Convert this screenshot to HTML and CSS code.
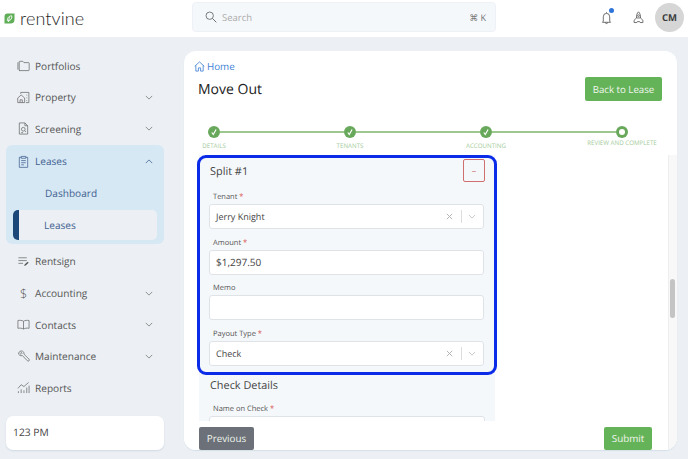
FILE: index.html
```html
<!DOCTYPE html>
<html lang="en">
<head>
<meta charset="utf-8">
<title>Move Out</title>
<link rel="stylesheet" href="styles.css">
</head>
<body>
<header class="topbar">
  <div class="brand">
    <svg class="leaf" viewBox="0 0 11 11" width="11" height="11"><path d="M3.500.5H10.500V6.500A4 4 0 0 1 6.500 10.500H.5V3.500A3 3 0 0 1 3.500.5z" fill="#5fae57"/><path d="M3.500 8.200C2.800 5.500 4.500 3 7.800 2.800 8.200 5.800 6.300 7.800 4.400 7.600M5.400 3.600L4.500 9" fill="none" stroke="#fff" stroke-width=".9"/></svg>
    <span class="wordmark">rentvine</span>
  </div>
  <div class="search">
    <svg class="ico" viewBox="0 0 14 14" width="12" height="12"><circle cx="5.500" cy="5.500" r="4.300" fill="none" stroke="#666" stroke-width="1"/><path d="M8.700 8.700l4.500 4.500" stroke="#666" stroke-width="1.100" fill="none"/></svg>
    <span class="search-text">Search</span>
    <span class="kbd">⌘ K</span>
  </div>
  <div class="top-actions">
    <span class="bell">
      <svg viewBox="0 0 12 15" width="11" height="14"><path d="M6 1.200V2.300M2.500 11V6.300a3.500 3.900 0 0 1 7 0V11l1 1.200h-9zM4.800 12.400a1.200 1.200 0 0 0 2.400 0" fill="none" stroke="#555" stroke-width=".9"/></svg>
      <i class="dot"></i>
    </span>
    <svg class="rocket" viewBox="0 0 12 14" width="11" height="13"><path d="M6 .8C4.300 2.300 3.800 4.500 3.800 7.500h4.400C8.200 4.500 7.700 2.300 6 .8zM3.800 7.500L1.200 10v2.500h3l.5-1h2.600l.5 1h3V10L8.200 7.500" fill="none" stroke="#555" stroke-width=".9"/><circle cx="6" cy="5" r="1" fill="none" stroke="#555" stroke-width=".8"/></svg>
    <span class="avatar">CM</span>
  </div>
</header>

<div class="shell">
  <nav class="sidebar">
    <a class="nav-item">
      <svg class="nav-ico" viewBox="0 0 14 14"><path d="M1 11.500V3.500M2.500 12.500h10a.6.6 0 0 0 .6-.6V4.500a.6.6 0 0 0-.6-.6H7.500L6.300 2.500H3a.6.6 0 0 0-.6.6v8.800a.6.6 0 0 0 .6.6z"/></svg>
      <span class="nav-label">Portfolios</span>
    </a>
    <a class="nav-item">
      <svg class="nav-ico" viewBox="0 0 14 14"><path d="M.8 7.500L4.500 4.300l3.700 3.200v5H.8zM3.300 12.500V9.500h2.400v3M4 3V1.500h8.800v11H9.500M10.500 4v.8M10.500 7v.8M10.500 10v.8"/></svg>
      <span class="nav-label">Property</span>
      <svg class="chev" viewBox="0 0 10 6"><path d="M1 1l4 4 4-4"/></svg>
    </a>
    <a class="nav-item">
      <svg class="nav-ico" viewBox="0 0 14 14"><path d="M2.500 1h6l3 3v9h-9zM8.500 1v3h3"/><circle cx="6.800" cy="7.800" r="2"/><path d="M8.300 9.300l1.500 1.500M4.500 11.500h2"/></svg>
      <span class="nav-label">Screening</span>
      <svg class="chev" viewBox="0 0 10 6"><path d="M1 1l4 4 4-4"/></svg>
    </a>
    <div class="group">
      <a class="nav-item in-group">
        <svg class="nav-ico blue" viewBox="0 0 14 14"><path d="M4.500 2.500H2.500v10.800h9V2.500H9.500M4.500 1.500h5v2h-5zM4.500 6h5M4.500 8.300h5M4.500 10.600h3"/></svg>
        <span class="nav-label blue-t">Leases</span>
        <svg class="chev blue" viewBox="0 0 10 6"><path d="M1 5l4-4 4 4"/></svg>
      </a>
      <a class="sub-item">Dashboard</a>
      <a class="sub-item current">Leases</a>
    </div>
    <a class="nav-item">
      <svg class="nav-ico" viewBox="0 0 14 14"><path d="M1.500 3h9M1.500 6h9M1.500 9h5"/><path class="fill" d="M7.800 11.800l.4-1.500 3.200-3 1.100 1.100-3.200 3z"/></svg>
      <span class="nav-label">Rentsign</span>
    </a>
    <a class="nav-item">
      <span class="dollar">$</span>
      <span class="nav-label">Accounting</span>
      <svg class="chev" viewBox="0 0 10 6"><path d="M1 1l4 4 4-4"/></svg>
    </a>
    <a class="nav-item">
      <svg class="nav-ico" viewBox="0 0 14 14"><path d="M7 3.500C5.500 2.500 3 2.300 1 2.700v8.400c2-.4 4.500-.2 6 .8 1.500-1 4-1.200 6-.8V2.700c-2-.4-4.500-.2-6 .8zM7 3.500v8.400"/></svg>
      <span class="nav-label">Contacts</span>
      <svg class="chev" viewBox="0 0 10 6"><path d="M1 1l4 4 4-4"/></svg>
    </a>
    <a class="nav-item">
      <svg class="nav-ico" viewBox="0 0 14 14"><path d="M5.800 1.200a3 3 0 0 0-4 3.400l1 1a3 3 0 0 0 3 .4l5.400 5.600a1.200 1.200 0 0 0 1.800-1.700L7.600 4.600A3 3 0 0 0 5.800 1.200zM4 2l1.500 1.500-1.200 1.200L2.800 3.300"/></svg>
      <span class="nav-label">Maintenance</span>
      <svg class="chev" viewBox="0 0 10 6"><path d="M1 1l4 4 4-4"/></svg>
    </a>
    <a class="nav-item">
      <svg class="nav-ico" viewBox="0 0 14 14"><path d="M1 8l3.500-4 3 2L12.500 1.500M1.500 13v-2M4.500 13V9M7.500 13v-3M10.500 13V7M13 13V5"/></svg>
      <span class="nav-label">Reports</span>
    </a>
    <div class="clock">123 PM</div>
  </nav>

  <main class="card">
    <div class="crumb">
      <svg viewBox="0 0 12 12" width="11" height="11"><path d="M.8 5.800L6 1l5.200 4.800M2 4.800V11h2.800V7.500h2.400V11H10V4.800" fill="none" stroke="#3f7fd6" stroke-width=".9"/></svg>
      <span>Home</span>
    </div>
    <div class="title-row">
      <h1 class="title">Move Out</h1>
      <button class="btn green back">Back to Lease</button>
    </div>
    <div class="stepper">
      <div class="step"><span class="circle"><svg viewBox="0 0 12 12" width="12" height="12"><path d="M3.800 6.500l1.500 2 2.800-5" fill="none" stroke="#fff" stroke-width="1.200"/></svg></span><span class="step-label">Details</span></div>
      <span class="conn"></span>
      <div class="step"><span class="circle"><svg viewBox="0 0 12 12" width="12" height="12"><path d="M3.800 6.500l1.500 2 2.800-5" fill="none" stroke="#fff" stroke-width="1.200"/></svg></span><span class="step-label">Tenants</span></div>
      <span class="conn"></span>
      <div class="step"><span class="circle"><svg viewBox="0 0 12 12" width="12" height="12"><path d="M3.800 6.500l1.500 2 2.800-5" fill="none" stroke="#fff" stroke-width="1.200"/></svg></span><span class="step-label">Accounting</span></div>
      <span class="conn"></span>
      <div class="step"><span class="circle active"><i class="hole"></i></span><span class="step-label last">Review and Complete</span></div>
    </div>

    <div class="lower">
      <div class="lower-main">
        <div class="scroll">
          <div class="panel">
            <section class="split">
              <div class="split-head">
                <h2 class="section-title">Split #1</h2>
                <button class="remove">–</button>
              </div>
              <div class="field">
                <label class="label">Tenant <b>*</b></label>
                <div class="input"><span class="value">Jerry Knight</span>
                  <svg class="x" viewBox="0 0 8 8"><path d="M1 1l6 6M7 1L1 7"/></svg><i class="sep"></i>
                  <svg class="sel-chev" viewBox="0 0 10 6"><path d="M1 1l4 4 4-4"/></svg></div>
              </div>
              <div class="field">
                <label class="label">Amount <b>*</b></label>
                <div class="input"><span class="value amount">$1,297.50</span></div>
              </div>
              <div class="field">
                <label class="label">Memo</label>
                <div class="input"></div>
              </div>
              <div class="field">
                <label class="label">Payout Type <b>*</b></label>
                <div class="input"><span class="value">Check</span>
                  <svg class="x" viewBox="0 0 8 8"><path d="M1 1l6 6M7 1L1 7"/></svg><i class="sep"></i>
                  <svg class="sel-chev" viewBox="0 0 10 6"><path d="M1 1l4 4 4-4"/></svg></div>
              </div>
            </section>
            <section class="details">
              <h2 class="section-title">Check Details</h2>
              <div class="field">
                <label class="label">Name on Check <b>*</b></label>
                <div class="input"></div>
              </div>
            </section>
          </div>
        </div>
        <div class="footer">
          <button class="btn gray">Previous</button>
          <button class="btn green submit">Submit</button>
        </div>
      </div>
      <div class="track"><span class="thumb"></span></div>
    </div>
  </main>
</div>
</body>
</html>
```
FILE: styles.css
```css
* { box-sizing: border-box; }
html, body { margin: 0; height: 459px; overflow: hidden; }
body {
  background: #ecf0f4;
  font-family: "Open Sans", "Liberation Sans", sans-serif;
  color: #555;
  display: flex;
  flex-direction: column;
  text-rendering: geometricPrecision;
}
button { text-rendering: geometricPrecision; }
.topbar {
  height: 37px;
  flex: none;
  background: #fff;
  display: flex;
  align-items: flex-start;
  position: relative;
}
.brand { width: 192px; height: 37px; display: flex; align-items: center; padding: 0 0 0 4px; gap: 5px; }
.leaf { flex: none; }
.wordmark { font-family: Lato, sans-serif; font-weight: 300; font-size: 18px; color: #222; letter-spacing: .1px; line-height: 1; margin-bottom: 2px; }
.search {
  width: 304px;
  height: 30px;
  margin-top: 2px;
  background: #f5f8fb;
  border: 1px solid #eef1f5;
  border-radius: 4px;
  display: flex;
  align-items: center;
  padding: 0 9px 0 12px;
  font-size: 9.500px;
}
.search-text { margin-left: 5px; color: #aaa; flex: 1; }
.kbd { color: #777; font-size: 9px; }
.top-actions { flex: 1; display: flex; align-items: center; height: 34px; justify-content: flex-end; padding-right: 4px; }
.bell { position: relative; display: flex; margin-right: 21px; margin-top: 1px; }
.dot { position: absolute; right: -2px; top: -3px; width: 5px; height: 5px; border-radius: 50%; background: #2f74d8; }
.rocket { margin-right: 11px; }
.avatar {
  width: 29px; height: 29px; border-radius: 50%; background: #d6d6d6;
  display: flex; align-items: center; justify-content: center;
  font-size: 9.500px; font-weight: 700; color: #3c3c3c;
}
.shell { flex: 1; display: flex; min-height: 0; }
.sidebar { width: 184px; flex: none; padding: 12.900px 20px 0 6px; display: flex; flex-direction: column; }
.nav-item { height: 31.600px; flex: none; display: flex; align-items: center; padding: 0 11px 0 11px; font-size: 10.100px; color: #555; }
.nav-ico { width: 13px; height: 13px; flex: none; fill: none; stroke: #666; stroke-width: .8; }
.nav-ico .fill { fill: #555; stroke: none; }
.nav-ico.blue { stroke: #40608f; }
.dollar { width: 13px; text-align: center; font-size: 12.500px; font-weight: 300; color: #555; }
.nav-label { margin-left: 5px; flex: 1; }
.blue-t { color: #41618f; }
.chev { width: 8px; height: 5px; flex: none; fill: none; stroke: #777; stroke-width: 1; }
.chev.blue { stroke: #41618f; }
.group { background: #d7e8f5; border-radius: 6px; height: 99px; flex: none; margin: 0 0 2px; display: flex; flex-direction: column; padding-bottom: 4px; }
.in-group { height: 33px; }
.sub-item { height: 31px; flex: none; display: flex; align-items: center; padding-left: 39px; font-size: 10.100px; color: #41618f; }
.sub-item.current { margin: auto 7px 0; padding: 0 0 0 25px; height: 30px; background: #ecf0f4; border-radius: 5px; border-left: 6px solid #1b4779; }
.clock {
  margin-top: 12.100px;
  height: 34px;
  flex: none;
  background: #fff;
  border-radius: 7px;
  box-shadow: 0 1px 2px #cfd8e3;
  display: flex;
  align-items: center;
  padding-left: 7px;
  font-size: 10.300px;
  color: #444;
}
.card {
  width: 493px;
  height: 399px;
  margin-top: 14px;
  background: #fff;
  border-radius: 12px;
  box-shadow: 0 1px 1px #d6dfe9;
  overflow: hidden;
  display: flex;
  flex-direction: column;
}
.crumb { display: flex; align-items: center; gap: 2px; height: 18px; margin: 6px 0 0 10px; color: #3f7fd6; font-size: 9.800px; flex: none; }
.title-row { display: flex; align-items: center; justify-content: space-between; padding: 0 15px 0 14px; margin-top: 2px; height: 24px; flex: none; }
.title { margin: 1px 0 0; font-size: 14px; font-weight: 500; color: #222; }
.btn { border: 0; border-radius: 2px; font-family: inherit; color: #f1f6ef; padding: 0; }
.green { background: #65b359; }
.gray { background: #6c7179; }
.back { width: 77px; height: 24px; font-size: 9.700px; }
.stepper { display: flex; margin: 24.500px 0 0; padding: 0 49px 0 24px; height: 29.500px; flex: none; }
.step { width: 12px; flex: none; display: flex; flex-direction: column; align-items: center; }
.circle { width: 12px; height: 12px; flex: none; border-radius: 50%; background: #68a85a; display: flex; align-items: center; justify-content: center; }
.hole { width: 6px; height: 6px; border-radius: 50%; background: #fff; }
.conn { flex: 1; height: 2px; margin-top: 5px; background: #9cc78f; }
.step-label { margin-top: 3px; font-size: 6.200px; white-space: nowrap; text-transform: uppercase; color: #a6cc9c; }
.step-label.last { margin-top: 0; }
.lower { flex: 1; display: flex; min-height: 0; }
.lower-main { flex: 1; display: flex; flex-direction: column; min-width: 0; }
.scroll { flex: 1; min-height: 0; overflow: hidden; padding: 0 173px 0 15px; }
.panel { background: #f5f8fb; height: 290px; }
.split {
  margin: 0 -2px;
  padding: 0 10px 8px 9px;
  border: 3px solid #0a2be8;
  border-radius: 9px;
  height: 220px;
}
.split-head { display: flex; justify-content: space-between; align-items: flex-start; height: 32px; }
.section-title { margin: 0 0 0 1px; font-size: 10.900px; font-weight: 400; color: #444; line-height: 28px; }
.remove { width: 22px; height: 23px; margin: 1px -1px 0 0; border: 1px solid #cf6f6f; border-radius: 2px; background: transparent; color: #cf6f6f; font-size: 9px; padding: 0; font-family: inherit; }
.field { height: 45.500px; }
.label { display: block; font-size: 7.500px; height: 14px; padding-left: 4px; line-height: 15px; color: #555; }
.label b { color: #d9534f; font-weight: 400; }
.input { height: 25px; background: #fff; border: 1px solid #dfe3e8; border-radius: 3px; display: flex; align-items: center; padding: 0 7px 0 6px; font-size: 9px; color: #444; }
.value { flex: 1; }
.value.amount { font-size: 10px; }
.x { width: 7px; height: 7px; fill: none; stroke: #b3b3b3; stroke-width: 1.100; }
.sep { width: 1px; height: 13px; background: #ddd; margin: 0 6px 0 8px; }
.sel-chev { width: 8px; height: 5px; fill: none; stroke: #bbb; stroke-width: 1; }
.details { padding: 0 10px; }
.details .section-title { line-height: 22px; }
.details .field { margin-top: 5px; }
.footer { height: 29px; flex: none; background: #fff; border-top-left-radius: 8px; display: flex; justify-content: space-between; align-items: flex-end; padding: 0 16px 0 15px; position: relative; }
.footer .btn { height: 23px; font-size: 9.800px; }
.footer .gray { width: 55px; }
.submit { width: 48px; }
.track { width: 9px; flex: none; background: #f8f8f8; border-left: 1px solid #eee; padding: 124px 1px 0; }
.thumb { display: block; width: 5px; height: 39px; border-radius: 3px; background: #c4c4c4; }
```
